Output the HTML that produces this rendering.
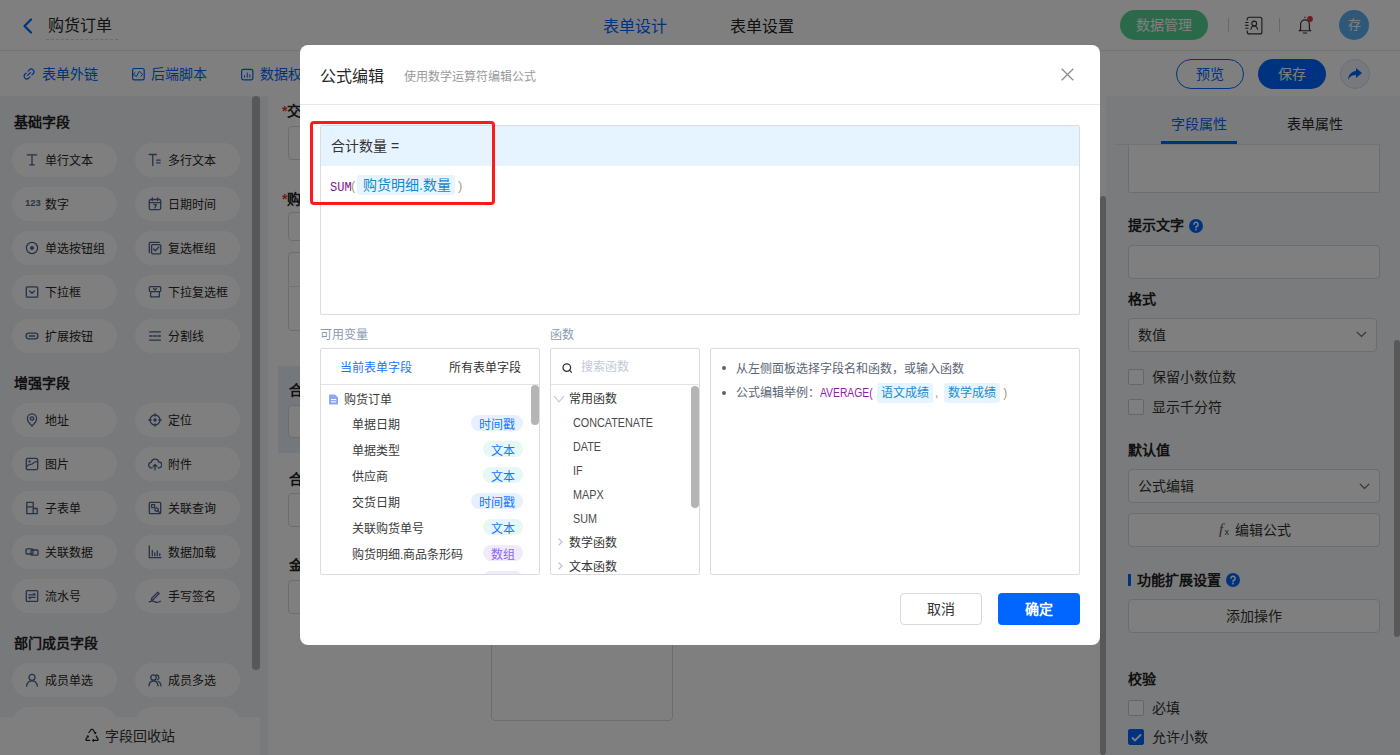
<!DOCTYPE html>
<html lang="zh-CN"><head><meta charset="utf-8">
<style>
*{box-sizing:border-box;margin:0;padding:0}
html,body{width:1400px;height:755px;overflow:hidden;background:#fff}
body{font-family:"Liberation Sans",sans-serif;color:#333;position:relative}
.a{position:absolute}
svg{display:block}
/* header */
#hdr{left:0;top:0;width:1400px;height:51px;background:#fff;border-bottom:1px solid #e6e6e6}
#tb{left:0;top:51px;width:1400px;height:45px;background:#fff}
#lp{left:0;top:96px;width:268px;height:659px;background:#f1f2f6}
#cv{left:268px;top:96px;width:838px;height:659px;background:#fff}
#rp{left:1106px;top:96px;width:294px;height:659px;background:#f5f6f9}
.sect{font-size:14px;font-weight:bold;color:#222;left:14px;line-height:14px}
.pill{width:105px;height:34px;border-radius:17px;background:#fff}
.pill .ic{position:absolute;left:13px;top:10px;width:12px;height:12px}
.pill .t{position:absolute;left:33px;top:12px;font-size:12px;line-height:12px;color:#262626;white-space:nowrap}
.lbl{font-size:14px;font-weight:bold;color:#222;line-height:14px;left:1128px}
.inp{left:1128px;width:252px;background:#fff;border:1px solid #dadada;border-radius:4px}
.cb{left:1128px;width:16px;height:16px;border:1px solid #c9ccd3;border-radius:2px;background:#fff}
.cbt{left:1152px;font-size:14px;line-height:14px;color:#333}
#mask{left:0;top:0;width:1400px;height:755px;background:rgba(0,0,0,.5)}
/* modal */
#modal{left:300px;top:45px;width:800px;height:600px;background:#fff;border-radius:8px}
.m{position:absolute}
.fn{left:22px;font-size:12px;line-height:16px;color:#4a4a4a;transform:scaleX(.9);transform-origin:0 0}
.tg{display:inline-block;height:20px;padding:0 4px;margin-left:4px;background:#e8f4fd;border-radius:3px;color:#1a8ccc;line-height:20px}
.vr{position:absolute;left:31px;font-size:12px;line-height:16px;color:#3a3a3a;white-space:nowrap}
.vt{position:absolute;height:16px;border-radius:8px;font-size:12px;line-height:16px;text-align:center;padding:2px 8px 0}
</style></head><body>

<!-- ===== HEADER ===== -->
<div id="hdr" class="a">
  <svg class="a" style="left:22px;top:18px" width="11" height="16" viewBox="0 0 11 16"><path d="M9 1.5L2.5 8L9 14.5" fill="none" stroke="#0066ff" stroke-width="2.2" stroke-linecap="round" stroke-linejoin="round"/></svg>
  <div class="a" style="left:48px;top:16px;font-size:16px;line-height:20px;color:#262626">购货订单</div>
  <div class="a" style="left:46px;top:39px;width:72px;border-top:1px dashed #d6d6d6"></div>
  <div class="a" style="left:603px;top:17px;font-size:16px;line-height:20px;color:#0066ff">表单设计</div>
  <div class="a" style="left:730px;top:17px;font-size:16px;line-height:20px;color:#222">表单设置</div>
  <div class="a" style="left:1120px;top:10px;width:88px;height:30px;border-radius:15px;background:#55d394;color:#fff;font-size:14px;line-height:30px;text-align:center">数据管理</div>
  <div class="a" style="left:1228px;top:18px;width:1px;height:14px;background:#d0d0d0"></div>
  <svg class="a" style="left:1244px;top:16px" width="20" height="19" viewBox="0 0 20 19"><path d="M3.2 4.6V3.2a2 2 0 0 1 2-2h10.7a2 2 0 0 1 2 2v12.7a2 2 0 0 1-2 2H5.2a2 2 0 0 1-2-2v-1.3" fill="none" stroke="#333" stroke-width="1.1"/><path d="M1.2 6.5h3.3M1.2 9.4h3.3M1.2 12.3h3.3" stroke="#333" stroke-width="1.1"/><circle cx="10.2" cy="7.5" r="2.4" fill="none" stroke="#333" stroke-width="1.1"/><path d="M6.8 13.7c.3-2.3 1.6-3.7 3.4-3.7s3.1 1.4 3.4 3.7" fill="none" stroke="#333" stroke-width="1.1"/></svg>
  <div class="a" style="left:1279px;top:18px;width:1px;height:14px;background:#d0d0d0"></div>
  <svg class="a" style="left:1296px;top:15px" width="20" height="20" viewBox="0 0 20 20"><path d="M8.3 2.3h1.4" stroke="#333" stroke-width="1.1"/><path d="M4.6 14.6V9.2a4.4 4.4 0 0 1 8.8 0v5.4l1.4 1.1H3.2z" fill="none" stroke="#333" stroke-width="1.15" stroke-linejoin="round"/><path d="M7.3 18h3.4" stroke="#333" stroke-width="1.2" stroke-linecap="round"/><circle cx="14" cy="4" r="2.9" fill="#e53935"/></svg>
  <div class="a" style="left:1339px;top:10px;width:30px;height:30px;border-radius:50%;background:#5ab0f4;color:#fff;font-size:13px;line-height:30px;text-align:center">存</div>
</div>

<!-- ===== TOOLBAR ===== -->
<div id="tb" class="a">
  <svg class="a" style="left:22px;top:16px" width="14" height="14" viewBox="0 0 14 14"><g transform="rotate(-45 7 7)" fill="none" stroke="#0066ff" stroke-width="1.2" stroke-linecap="round"><path d="M5.6 4.3H3.9a2.7 2.7 0 0 0 0 5.4h1.7M8.4 4.3h1.7a2.7 2.7 0 0 1 0 5.4H8.4M5 7h4"/></g></svg>
  <div class="a" style="left:42px;top:15px;font-size:14px;line-height:16px;color:#0066ff">表单外链</div>
  <svg class="a" style="left:131px;top:16px" width="14" height="14" viewBox="0 0 14 14"><rect x="1.6" y="1.5" width="11.6" height="11.3" rx="1.6" fill="none" stroke="#0066ff" stroke-width="1.2"/><path d="M4.4 5.3L2.2 7.4 5.4 9.5 8.4 4.2 11.6 7.4 9.7 9.5" fill="none" stroke="#0066ff" stroke-width="1" stroke-linejoin="round"/></svg>
  <div class="a" style="left:151px;top:15px;font-size:14px;line-height:16px;color:#0066ff">后端脚本</div>
  <svg class="a" style="left:240px;top:16px" width="14" height="14" viewBox="0 0 14 14"><rect x="1.6" y="2.4" width="11.3" height="10.4" rx="1.8" fill="none" stroke="#0066ff" stroke-width="1.2"/><path d="M4.6 10.5V8.2M7.3 10.5V5.6M9.8 10.5V7.3" stroke="#0066ff" stroke-width="1"/></svg>
  <div class="a" style="left:260px;top:15px;font-size:14px;line-height:16px;color:#0066ff">数据权限</div>
  <div class="a" style="left:1176px;top:8px;width:68px;height:30px;border-radius:15px;border:1px solid #0066ff;color:#0066ff;font-size:14px;line-height:28px;text-align:center">预览</div>
  <div class="a" style="left:1258px;top:8px;width:68px;height:30px;border-radius:15px;background:#0066ff;color:#fff;font-size:14px;line-height:30px;text-align:center">保存</div>
  <div class="a" style="left:1340px;top:8px;width:30px;height:30px;border-radius:50%;border:1px solid #d3dcf5;background:#eef2fb"></div>
  <svg class="a" style="left:1347px;top:16px" width="16" height="14" viewBox="0 0 16 14"><path d="M9 1l6 5-6 5V8C5 8 2.5 9.5 1 13c.4-5 3-8.5 8-9z" fill="#0066ff"/></svg>
</div>

<!-- ===== LEFT PANEL ===== -->
<div id="lp" class="a">
</div>
<div class="a sect" style="top:115px">基础字段</div>
<div class="a pill" style="left:12px;top:143px"><span class="ic"><svg width="14" height="14" viewBox="0 0 14 14" fill="none" stroke="#4e6290" stroke-width="1.3" stroke-linecap="round" stroke-linejoin="round"><path d="M2.2 1.8h9.6M7 1.8v10M4.8 11.8h4.4"/></svg></span><span class="t">单行文本</span></div>
<div class="a pill" style="left:135px;top:143px"><span class="ic"><svg width="14" height="14" viewBox="0 0 14 14" fill="none" stroke="#4e6290" stroke-width="1.3" stroke-linecap="round" stroke-linejoin="round"><path d="M1.2 1.5h7.2M4.8 1.5v11M8.6 7.2h3.6M8.6 9.8h3.6"/></svg></span><span class="t">多行文本</span></div>
<div class="a pill" style="left:12px;top:187px"><span class="ic"><svg width="16" height="14" viewBox="0 0 16 14"><text x="0" y="8.6" font-family="Liberation Sans" font-weight="bold" font-size="9.5" fill="#56688f">123</text></svg></span><span class="t">数字</span></div>
<div class="a pill" style="left:135px;top:187px"><span class="ic"><svg width="14" height="14" viewBox="0 0 14 14" fill="none" stroke="#4e6290" stroke-width="1.3" stroke-linecap="round" stroke-linejoin="round"><rect x="1.3" y="2.5" width="11.4" height="10.2" rx="1.5"/><path d="M4.3 1v2.6M9.7 1v2.6M1.3 5.6h11.4M5.8 7.6h2.6L6.9 11"/></svg></span><span class="t">日期时间</span></div>
<div class="a pill" style="left:12px;top:231px"><span class="ic"><svg width="14" height="14" viewBox="0 0 14 14" fill="none" stroke="#4e6290" stroke-width="1.3" stroke-linecap="round" stroke-linejoin="round"><circle cx="7" cy="7" r="5.6"/><circle cx="7" cy="7" r="1.3" fill="#4e6290"/></svg></span><span class="t">单选按钮组</span></div>
<div class="a pill" style="left:135px;top:231px"><span class="ic"><svg width="14" height="14" viewBox="0 0 14 14" fill="none" stroke="#4e6290" stroke-width="1.3" stroke-linecap="round" stroke-linejoin="round"><path d="M1.3 11.5V2.3a1 1 0 0 1 1-1h9.2"/><rect x="3.6" y="3.6" width="9.2" height="9.2" rx="1"/><path d="M5.6 8l1.7 1.7L10.8 6"/></svg></span><span class="t">复选框组</span></div>
<div class="a pill" style="left:12px;top:275px"><span class="ic"><svg width="14" height="14" viewBox="0 0 14 14" fill="none" stroke="#4e6290" stroke-width="1.3" stroke-linecap="round" stroke-linejoin="round"><rect x="1.3" y="1.8" width="11.4" height="10.4" rx="1"/><path d="M4.6 6l2.4 2.3L9.4 6"/></svg></span><span class="t">下拉框</span></div>
<div class="a pill" style="left:135px;top:275px"><span class="ic"><svg width="14" height="14" viewBox="0 0 14 14" fill="none" stroke="#4e6290" stroke-width="1.3" stroke-linecap="round" stroke-linejoin="round"><rect x="1.3" y="1.6" width="11.4" height="5" rx="1"/><path d="M2.6 6.6v5.2h8.8V6.6M5.5 3.5L7 5l1.5-1.5"/></svg></span><span class="t">下拉复选框</span></div>
<div class="a pill" style="left:12px;top:319px"><span class="ic"><svg width="14" height="14" viewBox="0 0 14 14" fill="none" stroke="#4e6290" stroke-width="1.3" stroke-linecap="round" stroke-linejoin="round"><rect x="1" y="4.2" width="12" height="5.6" rx="2.8"/><path d="M4.2 7h5.6"/></svg></span><span class="t">扩展按钮</span></div>
<div class="a pill" style="left:135px;top:319px"><span class="ic"><svg width="14" height="14" viewBox="0 0 14 14" fill="none" stroke="#4e6290" stroke-width="1.3" stroke-linecap="round" stroke-linejoin="round"><path d="M1.6 2.8h10.8M1.6 7h2.6M5.7 7h2.6M9.8 7h2.6M1.6 11.2h10.8"/></svg></span><span class="t">分割线</span></div>
<div class="a sect" style="top:376px">增强字段</div>
<div class="a pill" style="left:12px;top:403px"><span class="ic"><svg width="14" height="14" viewBox="0 0 14 14" fill="none" stroke="#4e6290" stroke-width="1.3" stroke-linecap="round" stroke-linejoin="round"><path d="M7 13c-2.8-2.7-4.6-5-4.6-7.5a4.6 4.6 0 0 1 9.2 0C11.6 8 9.8 10.3 7 13z"/><circle cx="7" cy="5.5" r="1.7"/></svg></span><span class="t">地址</span></div>
<div class="a pill" style="left:135px;top:403px"><span class="ic"><svg width="14" height="14" viewBox="0 0 14 14" fill="none" stroke="#4e6290" stroke-width="1.3" stroke-linecap="round" stroke-linejoin="round"><circle cx="7" cy="7" r="5"/><circle cx="7" cy="7" r="1" fill="#4e6290"/><path d="M7 .8v2.4M7 10.8v2.4M.8 7h2.4M10.8 7h2.4"/></svg></span><span class="t">定位</span></div>
<div class="a pill" style="left:12px;top:447px"><span class="ic"><svg width="14" height="14" viewBox="0 0 14 14" fill="none" stroke="#4e6290" stroke-width="1.3" stroke-linecap="round" stroke-linejoin="round"><rect x="1.3" y="1.3" width="11.4" height="11.4" rx="1.5"/><path d="M1.8 9.5c2.2-3.5 4.5-1.2 6.2-3.2 1-1.2 2.4-1.8 4.4-1.6"/><circle cx="4.5" cy="4.5" r=".5" fill="#4e6290"/></svg></span><span class="t">图片</span></div>
<div class="a pill" style="left:135px;top:447px"><span class="ic"><svg width="14" height="14" viewBox="0 0 14 14" fill="none" stroke="#4e6290" stroke-width="1.3" stroke-linecap="round" stroke-linejoin="round"><path d="M4.2 10.8H3.6a2.7 2.7 0 0 1-.4-5.4A3.9 3.9 0 0 1 10.8 5a2.9 2.9 0 0 1 .2 5.8h-.8"/><path d="M7 12.8V7.6M5.2 9.3L7 7.5l1.8 1.8"/></svg></span><span class="t">附件</span></div>
<div class="a pill" style="left:12px;top:491px"><span class="ic"><svg width="14" height="14" viewBox="0 0 14 14" fill="none" stroke="#4e6290" stroke-width="1.3" stroke-linecap="round" stroke-linejoin="round"><path d="M1.8 1.3h6.4v11.4H1.8zM1.8 5.8h6.4M8.2 7.5h4v5.2h-4"/></svg></span><span class="t">子表单</span></div>
<div class="a pill" style="left:135px;top:491px"><span class="ic"><svg width="14" height="14" viewBox="0 0 14 14" fill="none" stroke="#4e6290" stroke-width="1.3" stroke-linecap="round" stroke-linejoin="round"><rect x="1.3" y="1.3" width="11.4" height="11.4" rx="1"/><rect x="3.6" y="3.6" width="3" height="3"/><circle cx="8.6" cy="8.6" r="1.7"/><path d="M9.8 9.8l1.6 1.6"/></svg></span><span class="t">关联查询</span></div>
<div class="a pill" style="left:12px;top:535px"><span class="ic"><svg width="14" height="14" viewBox="0 0 14 14" fill="none" stroke="#4e6290" stroke-width="1.3" stroke-linecap="round" stroke-linejoin="round"><rect x="1" y="3.8" width="7" height="5.2" rx="1"/><rect x="6" y="5" width="7" height="5.2" rx="1"/></svg></span><span class="t">关联数据</span></div>
<div class="a pill" style="left:135px;top:535px"><span class="ic"><svg width="14" height="14" viewBox="0 0 14 14" fill="none" stroke="#4e6290" stroke-width="1.3" stroke-linecap="round" stroke-linejoin="round"><path d="M1.3 1v11.7h11.7M4.3 5.5v5.2M6.8 8v2.7M9.3 6v4.7M11.8 8.6v2.1"/></svg></span><span class="t">数据加载</span></div>
<div class="a pill" style="left:12px;top:579px"><span class="ic"><svg width="14" height="14" viewBox="0 0 14 14" fill="none" stroke="#4e6290" stroke-width="1.3" stroke-linecap="round" stroke-linejoin="round"><rect x="1.3" y="1.6" width="11.4" height="10.8" rx="1"/><path d="M3.8 5.8h6.4L8.8 4.6M10.2 8.4H3.8l1.4 1.2"/></svg></span><span class="t">流水号</span></div>
<div class="a pill" style="left:135px;top:579px"><span class="ic"><svg width="14" height="14" viewBox="0 0 14 14" fill="none" stroke="#4e6290" stroke-width="1.3" stroke-linecap="round" stroke-linejoin="round"><path d="M3.5 9.5l6.3-6.3 1.4 1.4-6.3 6.3H3.5zM1.2 12.8c2-.9 4-.9 5.8 0s3.5.7 5.5-.5"/></svg></span><span class="t">手写签名</span></div>
<div class="a sect" style="top:636px">部门成员字段</div>
<div class="a pill" style="left:12px;top:663px"><span class="ic"><svg width="14" height="14" viewBox="0 0 14 14" fill="none" stroke="#4e6290" stroke-width="1.3" stroke-linecap="round" stroke-linejoin="round"><circle cx="7" cy="4.3" r="3"/><path d="M1.6 13.2c.4-3.4 2.6-5.4 5.4-5.4s5 2 5.4 5.4"/></svg></span><span class="t">成员单选</span></div>
<div class="a pill" style="left:135px;top:663px"><span class="ic"><svg width="14" height="14" viewBox="0 0 14 14" fill="none" stroke="#4e6290" stroke-width="1.3" stroke-linecap="round" stroke-linejoin="round"><circle cx="5.5" cy="4.5" r="2.7"/><path d="M.9 12.8c.4-3 2.2-4.8 4.6-4.8s4.2 1.8 4.6 4.8M8.6 2a2.6 2.6 0 0 1 .6 5M10.6 8.5c1.4.7 2.2 2.2 2.5 4.3"/></svg></span><span class="t">成员多选</span></div>
<div class="a pill" style="left:12px;top:707px"><span class="ic"><svg width="14" height="14" viewBox="0 0 14 14" fill="none" stroke="#4e6290" stroke-width="1.3" stroke-linecap="round" stroke-linejoin="round"></svg></span><span class="t">部门单选</span></div>
<div class="a pill" style="left:135px;top:707px"><span class="ic"><svg width="14" height="14" viewBox="0 0 14 14" fill="none" stroke="#4e6290" stroke-width="1.3" stroke-linecap="round" stroke-linejoin="round"></svg></span><span class="t">部门多选</span></div>
<div class="a" style="left:252px;top:96px;width:8px;height:574px;border-radius:4px;background:#b1b1b1"></div>
<div class="a" style="left:0;top:717px;width:260px;height:38px;background:#fff"></div>
<svg class="a" style="left:85px;top:728px" width="14" height="14" viewBox="0 0 14 14" fill="none" stroke="#222" stroke-width="1.2" stroke-linejoin="round"><path d="M3.6 5L6.3 1.3h1.4l2.6 4.2M8.9 4.6l1.5.9.5-1.6"/><path d="M11 7.6l2.2 4-.5.8H7.6M8.9 11.2l-1.3 1.2 1.3 1.1"/><path d="M5.2 12.4H1.3l-.5-.8L3 7.8M1.9 8.4l1.1-.6.6 1.5"/></svg>
<div class="a" style="left:105px;top:728px;font-size:14px;line-height:16px;color:#333">字段回收站</div>

<!-- ===== CANVAS ===== -->
<div id="cv" class="a"></div>
<!-- canvas content -->
<div class="a" style="left:278px;top:366px;width:822px;height:87px;background:#e9eef7"></div>
<div class="a" style="left:282px;top:103px;font-size:14px;line-height:16px;font-weight:bold;color:#222"><span style="color:#e53935">*</span>交货日期</div>
<div class="a" style="left:288px;top:126px;width:300px;height:34px;border:1px solid #dadada;border-radius:4px;background:#fff"></div>
<div class="a" style="left:282px;top:191px;font-size:14px;line-height:16px;font-weight:bold;color:#222"><span style="color:#e53935">*</span>购货明细</div>
<div class="a" style="left:288px;top:212px;width:300px;height:29px;border:1px solid #dadada;border-radius:4px;background:#fff"></div>
<div class="a" style="left:288px;top:252px;width:300px;height:79px;border:1px solid #dadada;border-radius:4px;background:#fff"></div>
<div class="a" style="left:288px;top:286px;width:300px;height:1px;background:#e4e6ea"></div>
<div class="a" style="left:289px;top:382px;font-size:14px;line-height:16px;font-weight:bold;color:#222">合计数量</div>
<div class="a" style="left:288px;top:405px;width:300px;height:33px;border:1px solid #dadada;border-radius:4px;background:#fff"></div>
<div class="a" style="left:289px;top:471px;font-size:14px;line-height:16px;font-weight:bold;color:#222">合计金额</div>
<div class="a" style="left:288px;top:493px;width:300px;height:34px;border:1px solid #dadada;border-radius:4px;background:#fff"></div>
<div class="a" style="left:289px;top:557px;font-size:14px;line-height:16px;font-weight:bold;color:#222">金额</div>
<div class="a" style="left:288px;top:580px;width:300px;height:34px;border:1px solid #dadada;border-radius:4px;background:#fff"></div>
<div class="a" style="left:491px;top:600px;width:182px;height:121px;border:1px solid #dadada;border-radius:4px;background:#fff"></div>

<div class="a" style="left:1100px;top:196px;width:6px;height:559px;border-radius:3px;background:#b1b1b1"></div>

<!-- ===== RIGHT PANEL ===== -->
<div id="rp" class="a"></div>
<!-- right panel content -->
<div class="a" style="left:1171px;top:116px;font-size:14px;line-height:16px;color:#0066ff">字段属性</div>
<div class="a" style="left:1287px;top:116px;font-size:14px;line-height:16px;color:#262626">表单属性</div>
<div class="a" style="left:1114px;top:144px;width:266px;height:1px;background:#e4e6ea"></div>
<div class="a" style="left:1161px;top:141px;width:76px;height:3px;background:#0066ff"></div>
<div class="a inp" style="top:145px;height:48px;border-top:none;border-radius:0 0 3px 3px"></div>
<div class="a lbl" style="top:218px">提示文字</div>
<svg class="a" style="left:1189px;top:219px" width="14" height="14" viewBox="0 0 14 14"><circle cx="7" cy="7" r="7" fill="#0066ff"/><path d="M4.9 5.3a2.1 2.1 0 1 1 3 1.9c-.6.3-.9.6-.9 1.3v.3" fill="none" stroke="#fff" stroke-width="1.5" stroke-linecap="round"/><circle cx="7" cy="10.6" r=".9" fill="#fff"/></svg>
<div class="a inp" style="top:245px;height:34px"></div>
<div class="a lbl" style="top:292px">格式</div>
<div class="a inp" style="top:318px;height:34px;width:249px"></div>
<div class="a" style="left:1138px;top:327px;font-size:14px;line-height:16px;color:#333">数值</div>
<svg class="a" style="left:1356px;top:331px" width="11" height="7" viewBox="0 0 11 7"><path d="M.8.8L5.5 5.5 10.2.8" fill="none" stroke="#666" stroke-width="1.2"/></svg>
<div class="a cb" style="top:369px"></div>
<div class="a cbt" style="top:370px">保留小数位数</div>
<div class="a cb" style="top:399px"></div>
<div class="a cbt" style="top:400px">显示千分符</div>
<div class="a lbl" style="top:443px">默认值</div>
<div class="a inp" style="top:469px;height:34px"></div>
<div class="a" style="left:1138px;top:478px;font-size:14px;line-height:16px;color:#333">公式编辑</div>
<svg class="a" style="left:1359px;top:483px" width="11" height="7" viewBox="0 0 11 7"><path d="M.8.8L5.5 5.5 10.2.8" fill="none" stroke="#666" stroke-width="1.2"/></svg>
<div class="a inp" style="top:513px;height:34px"></div>
<div class="a" style="left:1219px;top:521px;font-family:'Liberation Serif',serif;font-style:italic;font-size:15px;line-height:16px;color:#555">f</div><div class="a" style="left:1224.5px;top:527px;font-family:'Liberation Sans',sans-serif;font-size:9px;line-height:10px;color:#444">x</div>
<div class="a" style="left:1235px;top:522px;font-size:14px;line-height:16px;color:#333">编辑公式</div>
<div class="a" style="left:1128px;top:574px;width:3px;height:12px;background:#0066ff"></div>
<div class="a lbl" style="left:1137px;top:573px">功能扩展设置</div>
<svg class="a" style="left:1226px;top:573px" width="14" height="14" viewBox="0 0 14 14"><circle cx="7" cy="7" r="7" fill="#0066ff"/><path d="M4.9 5.3a2.1 2.1 0 1 1 3 1.9c-.6.3-.9.6-.9 1.3v.3" fill="none" stroke="#fff" stroke-width="1.5" stroke-linecap="round"/><circle cx="7" cy="10.6" r=".9" fill="#fff"/></svg>
<div class="a inp" style="top:599px;height:34px"></div>
<div class="a" style="left:1226px;top:608px;font-size:14px;line-height:16px;color:#333">添加操作</div>
<div class="a lbl" style="top:672px">校验</div>
<div class="a cb" style="top:700px"></div>
<div class="a cbt" style="top:701px">必填</div>
<div class="a cb" style="top:729px;background:#0066ff;border-color:#0066ff"></div>
<svg class="a" style="left:1131px;top:733px" width="11" height="9" viewBox="0 0 11 9"><path d="M1 4.5l3 3 6-6" fill="none" stroke="#fff" stroke-width="1.8"/></svg>
<div class="a cbt" style="top:730px">允许小数</div>
<div class="a" style="left:1394px;top:340px;width:6px;height:297px;border-radius:3px;background:#b1b1b1"></div>


<div id="mask" class="a"></div>

<!-- ===== MODAL ===== -->
<div id="modal" class="a">
  <div class="m" style="left:20px;top:22px;font-size:16px;line-height:20px;color:#262626">公式编辑</div>
  <div class="m" style="left:104px;top:24px;font-size:12px;line-height:16px;color:#9a9a9a">使用数学运算符编辑公式</div>
  <svg class="m" style="left:761px;top:23px" width="13" height="13" viewBox="0 0 13 13"><path d="M.7.7l11.6 11.6M12.3.7L.7 12.3" stroke="#8c8c8c" stroke-width="1.3"/></svg>
  <div class="m" style="left:0;top:59px;width:800px;height:1px;background:#e8e8e8"></div>
  <!-- editor -->
  <div class="m" style="left:20px;top:80px;width:760px;height:190px;border:1px solid #dcdcdc;border-radius:2px;overflow:hidden">
    <div class="m" style="left:0;top:0;width:758px;height:40px;background:#e6f4ff"></div>
    <div class="m" style="left:10px;top:12px;font-size:14px;line-height:16px;color:#333">合计数量 =</div>
    <div class="m" style="left:9px;top:54px;font-family:'Liberation Mono',monospace;font-size:12px;line-height:16px;color:#7d168f">SUM</div>
    <div class="m" style="left:30px;top:52px;font-size:13px;line-height:16px;color:#a3a17e">(</div>
    <div class="m" style="left:36px;top:49px;width:98px;height:20px;background:#e8f4fd;border-radius:3px"></div>
    <div class="m" style="left:42px;top:51px;font-size:14px;line-height:16px;color:#1688c8;white-space:nowrap">购货明细.数量</div>
    <div class="m" style="left:137px;top:52px;font-size:13px;line-height:16px;color:#a3a17e">)</div>
  </div>
  <div class="m" style="left:10px;top:76px;width:185px;height:84px;border:3px solid #ff1a1a;border-radius:4px"></div>
  <!-- labels -->
  <div class="m" style="left:20px;top:282px;font-size:12px;line-height:16px;color:#8b9ab3">可用变量</div>
  <div class="m" style="left:250px;top:282px;font-size:12px;line-height:16px;color:#8b9ab3">函数</div>
  <!-- variables box -->
  <div class="m" style="left:20px;top:303px;width:220px;height:227px;border:1px solid #dcdcdc;border-radius:2px;overflow:hidden">
    <div class="m" style="left:19px;top:11px;font-size:12px;line-height:16px;color:#1677ff">当前表单字段</div>
    <div class="m" style="left:128px;top:11px;font-size:12px;line-height:16px;color:#333">所有表单字段</div>
    <div class="m" style="left:0;top:35px;width:218px;height:1px;background:#e3e3e3"></div>
    <svg class="m" style="left:7px;top:45px" width="11" height="11" viewBox="0 0 11 11"><path d="M1 .5h6l3 3v7H1z" fill="#8fa8f5"/><path d="M3 5.5h5M3 7.8h5" stroke="#fff" stroke-width="1"/></svg>
    <div class="vr" style="left:23px;top:43px">购货订单</div>
<div class="vr" style="top:68px">单据日期</div><div class="vt" style="right:16px;top:66px;background:#e6f1ff;color:#1677ff">时间戳</div>
<div class="vr" style="top:94px">单据类型</div><div class="vt" style="right:16px;top:92px;background:#e5f7f7;color:#1677ff">文本</div>
<div class="vr" style="top:120px">供应商</div><div class="vt" style="right:16px;top:118px;background:#e5f7f7;color:#1677ff">文本</div>
<div class="vr" style="top:146px">交货日期</div><div class="vt" style="right:16px;top:144px;background:#e6f1ff;color:#1677ff">时间戳</div>
<div class="vr" style="top:172px">关联购货单号</div><div class="vt" style="right:16px;top:170px;background:#e5f7f7;color:#1677ff">文本</div>
<div class="vr" style="top:198px">购货明细.商品条形码</div><div class="vt" style="right:16px;top:196px;background:#efeafd;color:#9065f0">数组</div>
<div class="vr" style="top:224px">购货明细.商品名称</div><div class="vt" style="right:16px;top:222px;background:#efeafd;color:#9065f0">数组</div>
    <div class="m" style="left:210px;top:36px;width:7.5px;height:40px;border-radius:4px;background:#b5b5b5"></div>
  </div>
  <!-- functions box -->
  <div class="m" style="left:250px;top:303px;width:150px;height:227px;border:1px solid #dcdcdc;border-radius:2px;overflow:hidden">
    <svg class="m" style="left:11px;top:14px" width="11" height="10" viewBox="0 0 11 10"><circle cx="4.8" cy="4.6" r="3.8" fill="none" stroke="#333" stroke-width="1.3"/><path d="M7.6 7.4L9.8 9.6" stroke="#333" stroke-width="1.3"/></svg>
    <div class="m" style="left:30px;top:10px;font-size:12px;line-height:16px;color:#c2c9d6">搜索函数</div>
    <div class="m" style="left:0;top:35px;width:148px;height:1px;background:#e3e3e3"></div>
    <svg class="m" style="left:2px;top:46px" width="12" height="8" viewBox="0 0 12 8"><path d="M1 1.2l5 5.6 5-5.6" fill="none" stroke="#c5cad6" stroke-width="1.1"/></svg>
    <div class="m" style="left:18px;top:42px;font-size:12px;line-height:16px;color:#333">常用函数</div>
    <div class="m fn" style="top:66px">CONCATENATE</div>
    <div class="m fn" style="top:90px">DATE</div>
    <div class="m fn" style="top:114px">IF</div>
    <div class="m fn" style="top:138px">MAPX</div>
    <div class="m fn" style="top:162px">SUM</div>
    <svg class="m" style="left:7px;top:189px" width="5" height="8" viewBox="0 0 5 8"><path d="M.6.6L4 4 .6 7.4" fill="none" stroke="#b8bfcc" stroke-width="1.2"/></svg>
    <div class="m" style="left:18px;top:186px;font-size:12px;line-height:16px;color:#333">数学函数</div>
    <svg class="m" style="left:7px;top:213px" width="5" height="8" viewBox="0 0 5 8"><path d="M.6.6L4 4 .6 7.4" fill="none" stroke="#b8bfcc" stroke-width="1.2"/></svg>
    <div class="m" style="left:18px;top:210px;font-size:12px;line-height:16px;color:#333">文本函数</div>
    <div class="m" style="left:140px;top:37px;width:8px;height:122px;border-radius:4px;background:#b5b5b5"></div>
  </div>
  <!-- help box -->
  <div class="m" style="left:410px;top:303px;width:370px;height:227px;border:1px solid #dcdcdc;border-radius:2px">
    <div class="m" style="left:11px;top:17px;width:4px;height:4px;border-radius:50%;background:#5a6474"></div>
    <div class="m" style="left:25px;top:12px;font-size:12px;line-height:16px;color:#5a6474">从左侧面板选择字段名和函数，或输入函数</div>
    <div class="m" style="left:11px;top:42px;width:4px;height:4px;border-radius:50%;background:#5a6474"></div>
    <div class="m" style="left:25px;top:34px;height:20px;white-space:nowrap;font-size:12px;line-height:20px;color:#5a6474">公式编辑举例：<span style="display:inline-block;width:53px;vertical-align:top"><span style="display:inline-block;color:#8e1fa6;transform:scaleX(.86);transform-origin:0 0">AVERAGE(</span></span><span class="tg">语文成绩</span><span style="color:#9b9a78;margin:0 2px">,</span><span class="tg">数学成绩</span><span style="color:#9b9a78;margin-left:3px">)</span></div>
  </div>
  <!-- footer -->
  <div class="m" style="left:600px;top:548px;width:82px;height:32px;border:1px solid #d9d9d9;border-radius:4px;font-size:14px;line-height:30px;text-align:center;color:#333">取消</div>
  <div class="m" style="left:698px;top:548px;width:82px;height:32px;border-radius:4px;background:#0066ff;font-size:14px;line-height:32px;text-align:center;color:#fff;font-weight:bold">确定</div>
</div>


</body></html>
